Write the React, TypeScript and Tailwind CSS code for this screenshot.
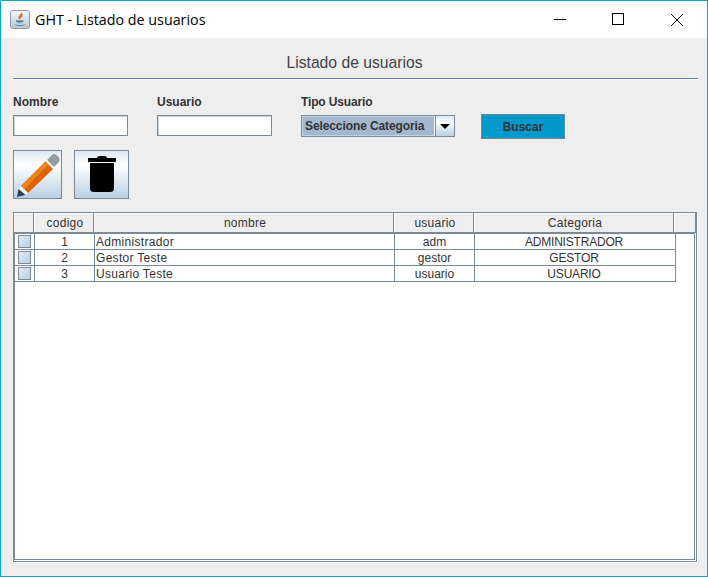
const rows = [
  { id: 1, name: 'Administrador', user: 'adm', cat: 'ADMINISTRADOR' },
  { id: 2, name: 'Gestor Teste', user: 'gestor', cat: 'GESTOR' },
  { id: 3, name: 'Usuario Teste', user: 'usuario', cat: 'USUARIO' },
];

const columns = [
  { label: '', className: 'w-[20px]' },
  { label: 'codigo', className: 'w-[60px]' },
  { label: 'nombre', className: 'w-[300px]' },
  { label: 'usuario', className: 'w-[80px]' },
  { label: 'Categoria', className: 'w-[200px]' },
  { label: '', className: 'flex-1' },
];

const metalGradient = 'bg-gradient-to-b from-[#dfe8f2] via-[#ffffff] via-30% to-[#b8cfe5]';

function JavaIcon() {
  return (
    <div className="w-[20px] h-[19px] rounded-[3px] border border-[#8a99a8] bg-gradient-to-b from-[#f4f6f9] to-[#bcc8d6] flex items-center justify-center">
      <svg width="14" height="15" viewBox="0 0 14 15">
        <path d="M8 0c1 2.500-3 3.500-2.500 6 .2 1 .8 1.500 1.300 2C6.500 6 10 5 9.500 2.500 9.300 1.500 8.700.5 8 0z" fill="#d9652a" />
        <path d="M3 8c2 .8 6 .8 7.500 0v1.500c-1.500 1-6 1-7.500 0z" fill="#4a7398" />
        <path d="M3.500 10.200c2 .7 5 .7 6.500 0-.5 1.300-5.500 1.500-6.500 0z" fill="#4a7398" />
        <path d="M1 12c3 1.400 9 1.400 12 0-1.500 2.500-10.500 2.500-12 0z" fill="#4a7398" />
      </svg>
    </div>
  );
}

function PencilIcon() {
  return (
    <svg width="45" height="45" viewBox="0 0 45 45">
      <path d="M32 8 L37 3 Q39 1 41.500 3 L44 5.500 Q45.500 8 44 10 L38.500 15.500 Z" fill="#929c9c" />
      <path d="M30.500 9.500 L32 8 L39.500 15.500 L38 17 Z" fill="#ffffff" />
      <path d="M30.500 9.500 L38 17 L13 41 L6 34 Z" fill="#e06204" />
      <path d="M30.500 9.500 L33.500 12.500 L9.500 37 L6 34 Z" fill="#ee851b" />
      <path d="M6 34 L13 41 L10.500 43 L3.500 37 Z" fill="#f2f2f2" />
      <path d="M3.500 37 L10.500 43 L2 45 Z" fill="#2f4054" />
    </svg>
  );
}

function TrashIcon() {
  return (
    <svg width="30" height="38" viewBox="0 1 30 38">
      <path d="M10 3 Q10 1 13 1 H17 Q20 1 20 3 H29 V7 H1 V3 Z" fill="#000000" />
      <path d="M3 8 H27 V33.500 Q27 37 23 37 H7 Q3 37 3 33.500 Z" fill="#000000" />
    </svg>
  );
}

export default function App() {
  return (
    <div className="w-[708px] h-[577px] flex flex-col border border-[#12a5c8] bg-[#eeeeee] font-['Liberation_Sans',Arial,sans-serif] text-[12px] text-[#333333] overflow-hidden">
      {/* title bar */}
      <div className="h-[37px] shrink-0 bg-white flex items-center pl-[9px]">
        <JavaIcon />
        <span className="ml-[5px] font-['Open_Sans',sans-serif] text-[14.3px] text-black">GHT - Listado de usuarios</span>
        <div className="ml-auto flex items-center">
          <svg width="58" height="37" viewBox="0 0 58 37" className="text-black">
            <path d="M23 18.500H35" stroke="currentColor" strokeWidth="1" />
          </svg>
          <svg width="58" height="37" viewBox="0 0 58 37">
            <rect x="23.500" y="12.500" width="11" height="11" fill="none" stroke="#000" strokeWidth="1" />
          </svg>
          <svg width="60" height="37" viewBox="0 0 60 37">
            <path d="M24 13L36 25M36 13L24 25" stroke="#000" strokeWidth="1" />
          </svg>
        </div>
      </div>

      {/* content */}
      <div className="flex-1 flex flex-col pl-[12px] pr-[9px] pb-[14px]">
        <div className="h-[41px] shrink-0 border-b border-[#5b7fbf] shadow-[0_1px_0_#ffffff] flex items-end justify-center pb-[5px]">
          <h1 className="text-[15.7px] leading-[20px] text-[#444444] -ml-[2px]">Listado de usuarios</h1>
        </div>

        <div className="flex items-start mt-[16px]">
          <div className="w-[144px]">
            <label className="block font-bold leading-[14px]">Nombre</label>
            <input className="block mt-[6px] w-[115px] h-[21px] bg-white border border-[#7a8a99] shadow-[inset_1px_1px_0_#c8d0d8]" />
          </div>
          <div className="w-[144px]">
            <label className="block font-bold leading-[14px]">Usuario</label>
            <input className="block mt-[6px] w-[115px] h-[21px] bg-white border border-[#7a8a99] shadow-[inset_1px_1px_0_#c8d0d8]" />
          </div>
          <div className="w-[180px]">
            <label className="block font-bold leading-[14px] tracking-[-0.15px]">Tipo Usuario</label>
            <div className="mt-[6px] w-[154px] h-[22px] flex border border-[#7a8a99] bg-white">
              <div className="flex-1 bg-[#a3b8cf] border border-[#c4d2e0] border-r-[#ffffff] flex items-center pl-[2px] font-bold tracking-[-0.1px] text-[#333333]">
                Seleccione Categoria
              </div>
              <div className={`w-[19px] flex items-center justify-center border-l border-[#7a8a99] ${metalGradient}`}>
                <div className="w-0 h-0 border-x-[5px] border-x-transparent border-t-[5px] border-t-black" />
              </div>
            </div>
          </div>
          <button className="mt-[19px] w-[84px] h-[25px] bg-[#0099cc] border border-[#6f8aa0] font-bold text-[#333333]">
            Buscar
          </button>
        </div>

        <div className="flex gap-[12px] mt-[11px]">
          <button className={`w-[49px] h-[49px] border border-[#7a8a99] flex items-center justify-center ${metalGradient}`}>
            <PencilIcon />
          </button>
          <button className={`w-[55px] h-[49px] border border-[#7a8a99] flex items-center justify-center ${metalGradient}`}>
            <TrashIcon />
          </button>
        </div>

        {/* table */}
        <div className="flex-1 mt-[13px] mr-px border border-[#7a8a99] shadow-[1px_1px_0_#ffffff] bg-white flex flex-col">
          <div className="h-[20px] shrink-0 flex bg-[#eeeeee]">
            {columns.map((col, i) => (
              <div
                key={i}
                className={`${col.className} border-r border-b border-[#7a8a99] shadow-[inset_1px_1px_0_#ffffff] flex items-center justify-center pl-[3px] leading-none tracking-[0.25px]`}
              >
                {col.label}
              </div>
            ))}
          </div>
          <div className="flex-1 bg-white border border-[#7a8a99] mr-px mb-px">
            <div className="w-[661px] border-r border-[#7a8a99]">
              {rows.map(row => (
                <div key={row.id} className="h-[16px] flex border-b border-[#7a8a99] leading-[15px]">
                  <div className="w-[20px] border-r border-[#7a8a99] flex items-center justify-center">
                    <div className="w-[13px] h-[13px] border border-[#7a8a99] bg-gradient-to-br from-[#e3ebf4] to-[#b8cfe5]" />
                  </div>
                  <div className="w-[60px] border-r border-[#7a8a99] pt-px text-center">{row.id}</div>
                  <div className="w-[300px] border-r border-[#7a8a99] pt-px pl-px tracking-[0.3px]">{row.name}</div>
                  <div className="w-[80px] border-r border-[#7a8a99] pt-px text-center">{row.user}</div>
                  <div className="flex-1 pt-px pr-[2px] text-center tracking-[-0.2px]">{row.cat}</div>
                </div>
              ))}
            </div>
          </div>
        </div>
      </div>
    </div>
  );
}
